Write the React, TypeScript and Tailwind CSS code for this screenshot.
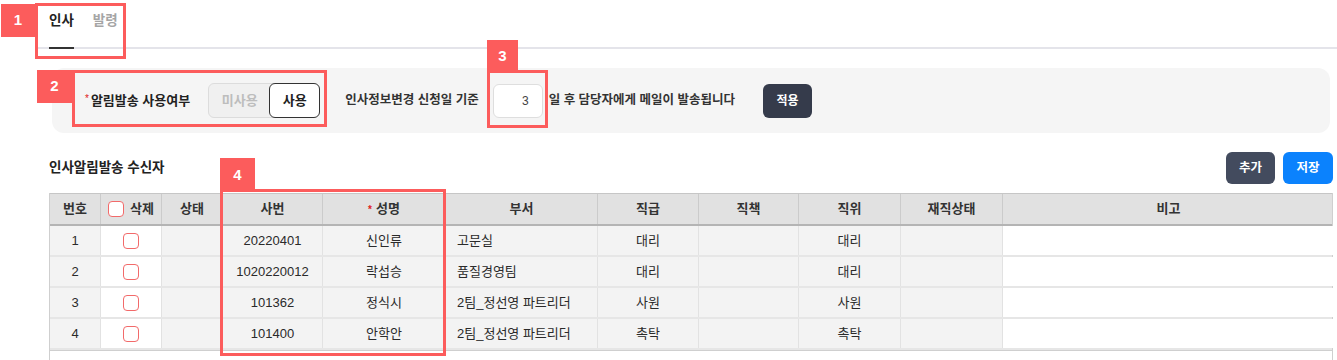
import React from "react";

const font = { fontFamily: '"Liberation Sans", "Noto Sans CJK KR", sans-serif' };

type Row = { no: string; emp: string; name: string; dept: string; grade: string; pos: string };
const rows: Row[] = [
  { no: "1", emp: "20220401", name: "신인류", dept: "고문실", grade: "대리", pos: "대리" },
  { no: "2", emp: "1020220012", name: "락섭승", dept: "품질경영팀", grade: "대리", pos: "대리" },
  { no: "3", emp: "101362", name: "정식시", dept: "2팀_정선영 파트리더", grade: "사원", pos: "사원" },
  { no: "4", emp: "101400", name: "안학안", dept: "2팀_정선영 파트리더", grade: "촉탁", pos: "촉탁" },
];

const cols = "grid grid-cols-[51px_61px_61px_100px_123px_152px_101px_100px_102px_102px_331px]";

function Box() {
  return <span className="inline-block w-[16px] h-[16px] rounded-[4px] border-[1.5px] border-[#f26a6a] bg-white" />;
}

function Label({ n, className }: { n: string; className: string }) {
  return (
    <div className={"absolute flex items-center justify-center bg-[#fc5c5c] text-white font-bold text-[15px] " + className}>
      {n}
    </div>
  );
}

export default function App() {
  const hc = "flex items-center justify-center border-r border-[#cbcbcb] text-[13px] font-bold text-[#333]";
  const bc = "flex items-center justify-center border-r border-[#e2e2e2] text-[13px] text-[#2a2a2a] bg-[#f3f3f3]";
  return (
    <div className="relative w-[1337px] h-[360px] bg-white overflow-hidden" style={font}>
      {/* Tabs */}
      <div className="ml-[37px] pl-[12px] h-[49px] flex items-end gap-[19px] border-b-2 border-[#e4e4ea]">
        <div className="-mb-[2px] pb-[17px] border-b-2 border-[#333] text-[13.5px] leading-[18px] font-bold text-[#222]">인사</div>
        <div className="-mb-[2px] pb-[17px] border-b-2 border-transparent text-[13.5px] leading-[18px] font-bold text-[#a5a5a5]">발령</div>
      </div>

      {/* Settings panel */}
      <div className="mt-[19px] ml-[52px] w-[1278px] h-[65px] rounded-[12px] bg-[#f5f5f5] flex items-center pl-[33px] text-[13px] text-[#222]">
        <span className="text-[#e02020] text-[10px] mr-[2px] -mt-[4px]">*</span>
        <span className="font-bold">알림발송 사용여부</span>
        <div className="ml-[18px] flex h-[35px] w-[112px] rounded-[6px] border border-[#dcdcdc] bg-[#f0f0f0]">
          <div className="w-[61px] flex items-center justify-center text-[#bdbdbd] font-bold">미사용</div>
          <div className="-m-[1px] flex-1 flex items-center justify-center bg-white border border-[#333] rounded-[6px] font-bold text-[#222]">사용</div>
        </div>
        <span className="ml-[25px] text-[12.5px] font-semibold text-[#333]">인사정보변경 신청일 기준</span>
        <div className="ml-[14px] w-[50px] h-[34px] rounded-[6px] border border-[#dedede] bg-white flex items-center justify-end pr-[13px] text-[12px] text-[#444]">3</div>
        <span className="ml-[6px] text-[12.5px] font-semibold text-[#333]">일 후 담당자에게 메일이 발송됩니다</span>
        <button className="ml-[28px] w-[49px] h-[34px] rounded-[6px] bg-[#353b4b] text-white font-bold text-[12px]">적용</button>
      </div>

      {/* Title row */}
      <div className="mt-[19px] ml-[49px] w-[1284px] h-[32px] flex items-center justify-between">
        <span className="text-[13.5px] font-bold text-[#222]">인사알림발송 수신자</span>
        <div className="flex gap-[8px]">
          <button className="w-[49px] h-[32px] rounded-[6px] bg-[#434b5e] text-white font-bold text-[12.5px]">추가</button>
          <button className="w-[50px] h-[32px] rounded-[6px] bg-[#0b82fd] text-white font-bold text-[12.5px]">저장</button>
        </div>
      </div>

      {/* Table */}
      <div className="mt-[9px] ml-[49px] w-[1284px] border-l border-r border-[#cfcfcf]">
        <div className={cols + " h-[33px] bg-[#e1e1e1] border-t border-[#c6c6c6] border-b-2 border-b-[#b4b4b4]"}>
          <div className={hc}>번호</div>
          <div className={hc + " gap-[6px]"}><Box />삭제</div>
          <div className={hc}>상태</div>
          <div className={hc}>사번</div>
          <div className={hc}><span className="text-[#e02020] text-[10px] mr-[4px]">*</span>성명</div>
          <div className={hc}>부서</div>
          <div className={hc}>직급</div>
          <div className={hc}>직책</div>
          <div className={hc}>직위</div>
          <div className={hc}>재직상태</div>
          <div className={hc + " border-r-0"}>비고</div>
        </div>
        {rows.map((r) => (
          <div key={r.no} className={cols + " h-[31px] border-b-2 border-[#e6e6e6]"}>
            <div className={bc}>{r.no}</div>
            <div className={bc + " bg-white"}><Box /></div>
            <div className={bc}></div>
            <div className={bc}>{r.emp}</div>
            <div className={bc}>{r.name}</div>
            <div className={bc + " justify-start pl-[11px]"}>{r.dept}</div>
            <div className={bc}>{r.grade}</div>
            <div className={bc}></div>
            <div className={bc}>{r.pos}</div>
            <div className={bc}></div>
            <div className={bc + " bg-white border-r-0"}></div>
          </div>
        ))}
        <div className="h-[20px] border-t border-[#cfcfcf]" />
      </div>

      {/* Annotations */}
      <Label n="1" className="left-[1px] top-[4px] w-[34px] h-[33px]" />
      <div className="absolute left-[35px] top-[3px] w-[91px] h-[56px] border-[3px] border-[#fc5c5c]" />

      <Label n="2" className="left-[37px] top-[70px] w-[35px] h-[33px]" />
      <div className="absolute left-[72px] top-[70px] w-[255px] h-[57px] border-[3px] border-[#fc5c5c]" />

      <Label n="3" className="left-[487px] top-[40px] w-[31px] h-[33px]" />
      <div className="absolute left-[487px] top-[70px] w-[61px] h-[58px] border-[3px] border-[#fc5c5c]" />

      <Label n="4" className="left-[220px] top-[158px] w-[35px] h-[34px]" />
      <div className="absolute left-[220px] top-[189px] w-[226px] h-[167px] border-[3px] border-[#fc5c5c]" />
    </div>
  );
}
